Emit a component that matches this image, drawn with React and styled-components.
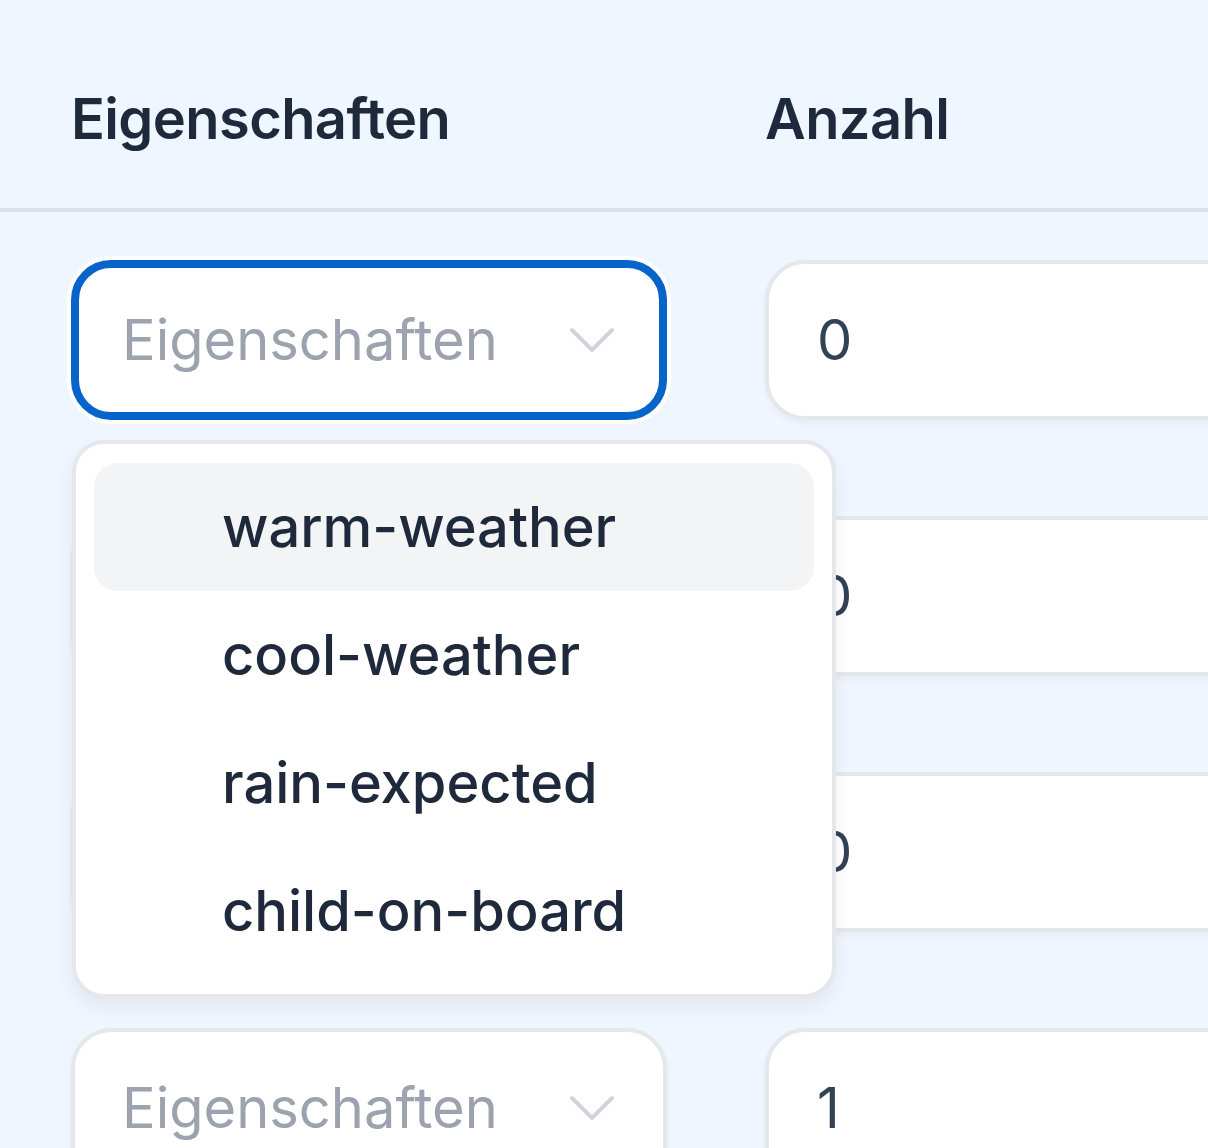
import React from "react";
import styled, { createGlobalStyle } from "styled-components";

const Global = createGlobalStyle`
  html, body { margin: 0; padding: 0; }
  body {
    background: #eff6ff;
    font-family: Inter, "Noto Sans", "Liberation Sans", sans-serif;
    overflow: hidden;
    width: 1208px;
    height: 1148px;
  }
`;

const Page = styled.div`
  width: 1208px;
  height: 1148px;
  overflow: hidden;
  background: #eff6ff;
`;

const Grid = styled.div`
  display: grid;
  grid-template-columns: 596px 640px;
  column-gap: 98px;
  padding-left: 71px;
`;

const Header = styled(Grid)`
  height: 212px;
  align-items: start;
  box-sizing: border-box;
  padding-top: 79px;
  border-bottom: 4px solid #d9e3ee;
`;

const HeadCell = styled.div`
  font-size: 56px;
  line-height: 80px;
  font-weight: 600;
  color: #1e293b;
  letter-spacing: -0.6px;
`;

const Body = styled.div`
  display: flex;
  flex-direction: column;
  gap: 96px;
  padding-top: 48px;
`;

const Row = styled(Grid)`
  height: 160px;
`;

const Cell = styled.div`
  position: relative;
  z-index: ${(p) => (p.$top ? 5 : 1)};
`;

const SelectBox = styled.div`
  box-sizing: border-box;
  height: 160px;
  width: 596px;
  display: flex;
  align-items: center;
  justify-content: space-between;
  background: #fff;
  border-radius: 40px;
  border: ${(p) => (p.$focused ? "8px solid #0764c9" : "4px solid #e5e7eb")};
  box-shadow: ${(p) =>
    p.$focused ? "0 0 0 4px #ffffff" : "0 4px 6px rgba(15, 23, 42, 0.04)"};
  padding-left: ${(p) => (p.$focused ? 43 : 47)}px;
  padding-right: ${(p) => (p.$focused ? 35 : 39)}px;
`;

const Placeholder = styled.span`
  font-size: 56px;
  font-weight: 400;
  color: #9ca3af;
`;

const Chevron = styled.svg`
  width: 64px;
  height: 64px;
  color: #d1d5db;
  flex: none;
`;

const NumberBox = styled.div`
  box-sizing: border-box;
  height: 160px;
  width: 640px;
  display: flex;
  align-items: center;
  background: #fff;
  border: 4px solid #e5e7eb;
  border-radius: 40px;
  box-shadow: 0 4px 6px rgba(15, 23, 42, 0.04);
  padding-left: 48px;
  font-size: 56px;
  font-weight: 400;
  color: #334155;
`;

const Menu = styled.ul`
  position: absolute;
  top: 180px;
  left: 1px;
  width: 764px;
  box-sizing: border-box;
  margin: 0;
  list-style: none;
  padding: 19px 18px;
  background: #fff;
  border: 4px solid #e5e7eb;
  border-radius: 32px;
  box-shadow: 0 10px 20px rgba(15, 23, 42, 0.06);
`;

const Option = styled.li`
  height: 128px;
  display: flex;
  align-items: center;
  padding-left: 128px;
  border-radius: 24px;
  background: ${(p) => (p.$active ? "#f3f4f6" : "transparent")};
  font-size: 56px;
  font-weight: 500;
  color: #1e293b;
`;

const ChevronIcon = () => (
  <Chevron viewBox="0 0 24 24" fill="none" stroke="currentColor" strokeWidth="1.5">
    <path strokeLinecap="round" strokeLinejoin="round" d="m19.5 8.25-7.5 7.5-7.5-7.5" />
  </Chevron>
);

const options = ["warm-weather", "cool-weather", "rain-expected", "child-on-board"];
const rows = [0, 0, 0, 1];

export default function App() {
  return (
    <Page>
      <Global />
      <Header>
        <HeadCell>Eigenschaften</HeadCell>
        <HeadCell>Anzahl</HeadCell>
      </Header>
      <Body>
        {rows.map((n, i) => (
          <Row key={i}>
            <Cell $top={i === 0}>
              <SelectBox $focused={i === 0}>
                <Placeholder>Eigenschaften</Placeholder>
                <ChevronIcon />
              </SelectBox>
              {i === 0 && (
                <Menu>
                  {options.map((o, j) => (
                    <Option key={o} $active={j === 0}>
                      {o}
                    </Option>
                  ))}
                </Menu>
              )}
            </Cell>
            <Cell>
              <NumberBox>{n}</NumberBox>
            </Cell>
          </Row>
        ))}
      </Body>
    </Page>
  );
}
